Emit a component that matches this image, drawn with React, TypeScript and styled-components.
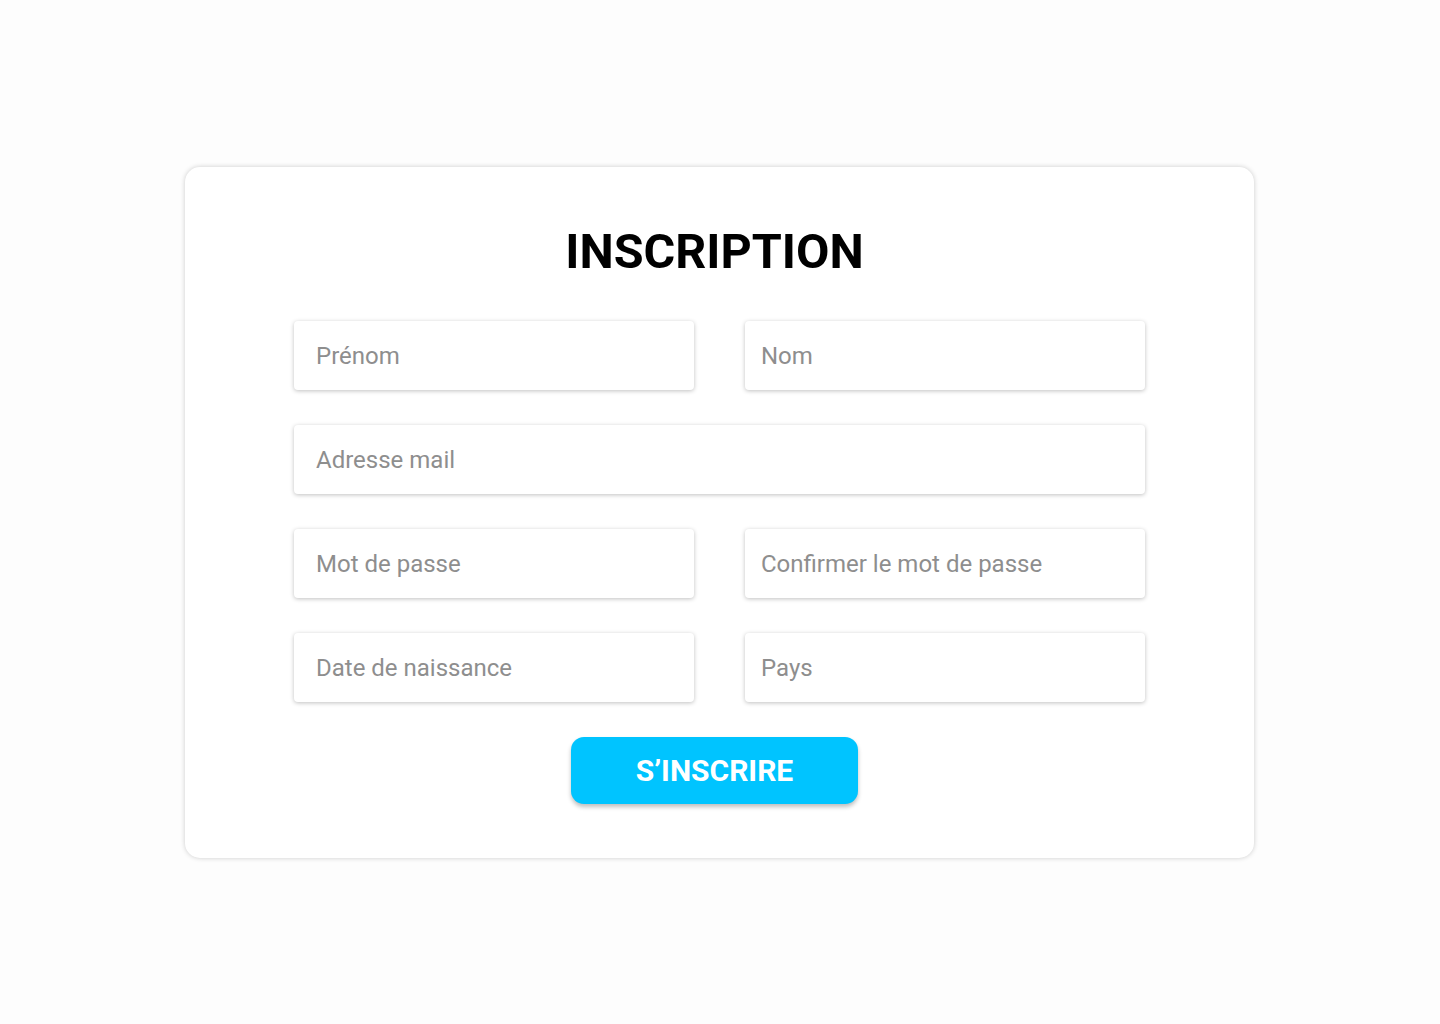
import React from "react";
import styled, { createGlobalStyle } from "styled-components";

const GlobalStyle = createGlobalStyle`
  html, body { margin: 0; padding: 0; background: #fdfdfd; }
  body { font-family: Roboto, "Liberation Sans", sans-serif; }
  * { box-sizing: border-box; }
`;

const Page = styled.div`
  width: 1440px;
  height: 1024px;
  display: flex;
  justify-content: center;
  padding: 167px 1px 0 0;
`;

const Card = styled.form`
  width: 1069px;
  height: 691px;
  background: #ffffff;
  border-radius: 15px;
  box-shadow: 0 0 5px rgba(0, 0, 0, 0.2);
  display: flex;
  flex-direction: column;
  align-items: center;
  padding-top: 57px;
`;

const Title = styled.h1`
  margin: 0 0 41px -10px;
  font-family: Roboto, sans-serif;
  font-weight: 700;
  font-size: 48.5px;
  line-height: 56px;
  color: #000;
`;

const Grid = styled.div`
  width: 851px;
  display: grid;
  grid-template-columns: 400px 400px;
  column-gap: 51px;
  row-gap: 35px;
`;

const Field = styled.input<{ $wide?: boolean; $right?: boolean }>`
  grid-column: ${(p) => (p.$wide ? "1 / span 2" : "auto")};
  height: 69px;
  border: none;
  outline: none;
  border-radius: 4px;
  background: #fff;
  box-shadow: 0 1px 4px rgba(0, 0, 0, 0.25);
  padding: 0 16px 0 ${(p) => (p.$right ? "16px" : "22px")};
  font-family: Roboto, sans-serif;
  font-size: 24px;
  color: #333;
  &::placeholder { color: #8e8e8e; }
`;

const Button = styled.button`
  margin: 35px 0 0 -10px;
  width: 287px;
  height: 67px;
  border: none;
  border-radius: 13px;
  background: #00c4ff;
  color: #fff;
  font-family: Roboto, sans-serif;
  font-weight: 700;
  font-size: 30px;
  box-shadow: 0 3px 4px rgba(0, 0, 0, 0.25);
  cursor: pointer;
`;

export default function App() {
  return (
    <>
      <GlobalStyle />
      <Page>
        <Card onSubmit={(e) => e.preventDefault()}>
          <Title>INSCRIPTION</Title>
          <Grid>
            <Field placeholder="Prénom" />
            <Field $right placeholder="Nom" />
            <Field $wide placeholder="Adresse mail" />
            <Field type="password" placeholder="Mot de passe" />
            <Field $right type="password" placeholder="Confirmer le mot de passe" />
            <Field placeholder="Date de naissance" />
            <Field $right placeholder="Pays" />
          </Grid>
          <Button type="submit">S’INSCRIRE</Button>
        </Card>
      </Page>
    </>
  );
}
